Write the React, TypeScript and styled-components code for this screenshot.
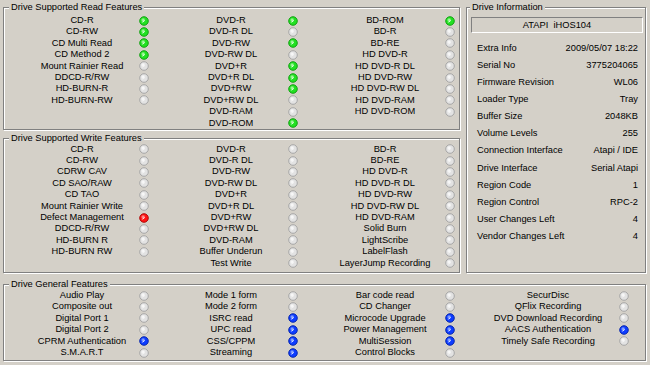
import React from "react";
import styled, { createGlobalStyle } from "styled-components";

type Kind = "g" | "o" | "b" | "r";
type Feature = [string, Kind];

const Global = createGlobalStyle`
  html, body { margin: 0; padding: 0; background: #d4d0c8; }
  body {
    font-family: "Liberation Sans", Arial, sans-serif;
    font-size: 9.3px;
    color: #000;
  }
`;

const Window = styled.div`
  width: 650px;
  height: 365px;
  box-sizing: border-box;
  padding: 7px 4px 0 3px;
  display: flex;
  flex-direction: column;
  gap: 11px;
  overflow: hidden;
`;

const TopRow = styled.div`
  display: flex;
  gap: 6px;
`;

const LeftColumn = styled.div`
  width: 457px;
  display: flex;
  flex-direction: column;
  gap: 8px;
`;

const Group = styled.div<{ $h: number; $w?: number }>`
  box-sizing: border-box;
  height: ${(p) => p.$h}px;
  ${(p) => (p.$w ? `width: ${p.$w}px;` : "")}
  border: 1px solid #808080;
  box-shadow: 1px 1px 0 #fff, inset 1px 1px 0 #fff;
  display: flex;
  flex-direction: column;
`;

const Title = styled.div<{ $left?: number }>`
  align-self: flex-start;
  margin: -7px 0 0 ${(p) => p.$left ?? 5}px;
  padding: 0 2px;
  height: 13px;
  line-height: 13px;
  background: #d4d0c8;
  white-space: nowrap;
`;

const Features = styled.div<{ $top: number }>`
  display: grid;
  grid-template-columns: 149px 151px 152px auto;
  margin-top: ${(p) => p.$top}px;
  padding-left: 28px;
`;

const Column = styled.div`
  display: flex;
  flex-direction: column;
`;

const Row = styled.div`
  display: flex;
  align-items: center;
  height: 11.4px;
`;

const Label = styled.span<{ $w: number }>`
  width: ${(p) => p.$w}px;
  text-align: center;
  white-space: nowrap;
  line-height: 11.4px;
`;

const LedSvg = styled.svg`
  display: block;
  flex: none;
  margin-left: 7px;
`;

const Field = styled.div`
  box-sizing: border-box;
  height: 16px;
  margin: 3px 2px 0 4px;
  border: 1px solid;
  border-color: #808080 #ffffff #ffffff #808080;
  text-align: center;
  line-height: 14px;
  white-space: pre;
`;

const InfoList = styled.div`
  margin-top: 6px;
  padding: 0 7px 0 10px;
  display: flex;
  flex-direction: column;
`;

const InfoRow = styled.div`
  display: flex;
  justify-content: space-between;
  align-items: center;
  height: 17.15px;
  white-space: nowrap;
`;

const LED_COLORS: Record<Kind, [string, string, string]> = {
  g: ["#c8ffc0", "#22e022", "#0c9c0c"],
  b: ["#b0c4ff", "#0d3cff", "#0020a8"],
  r: ["#ffb8b8", "#ff1414", "#a80000"],
  o: ["#ffffff", "#e2e2e2", "#a2a2a2"],
};

function Led({ k }: { k: Kind }) {
  const [hi, mid, edge] = LED_COLORS[k];
  const id = `led-grad-${k}`;
  return (
    <LedSvg width={10} height={10} viewBox="0 0 10 10">
      <defs>
        <radialGradient id={id} cx="40%" cy="38%" r="62%">
          <stop offset="0" stopColor={hi} />
          <stop offset="0.45" stopColor={mid} />
          <stop offset="1" stopColor={mid} />
        </radialGradient>
      </defs>
      <circle cx={5} cy={5} r={4.3} fill={`url(#${id})`} stroke={edge} strokeWidth={0.9} />
      <path
        d="M3.6 6.2 L5.2 4.6"
        stroke={k === "o" ? "#f6f6f6" : "#ffffff"}
        strokeWidth={1}
        strokeLinecap="round"
      />
    </LedSvg>
  );
}

const WIDTHS = [100, 100, 106, 128];

function FeatureGrid({ cols, top }: { cols: Feature[][]; top: number }) {
  return (
    <Features $top={top}>
      {cols.map((col, ci) => (
        <Column key={ci}>
          {col.map(([name, k]) => (
            <Row key={name}>
              <Label $w={WIDTHS[ci]}>{name}</Label>
              <Led k={k} />
            </Row>
          ))}
        </Column>
      ))}
    </Features>
  );
}

const readCols: Feature[][] = [
  [
    ["CD-R", "g"],
    ["CD-RW", "g"],
    ["CD Multi Read", "g"],
    ["CD Method 2", "g"],
    ["Mount Rainier Read", "o"],
    ["DDCD-R/RW", "o"],
    ["HD-BURN-R", "o"],
    ["HD-BURN-RW", "o"],
  ],
  [
    ["DVD-R", "g"],
    ["DVD-R DL", "o"],
    ["DVD-RW", "g"],
    ["DVD-RW DL", "o"],
    ["DVD+R", "g"],
    ["DVD+R DL", "g"],
    ["DVD+RW", "g"],
    ["DVD+RW DL", "o"],
    ["DVD-RAM", "o"],
    ["DVD-ROM", "g"],
  ],
  [
    ["BD-ROM", "g"],
    ["BD-R", "o"],
    ["BD-RE", "o"],
    ["HD DVD-R", "o"],
    ["HD DVD-R DL", "o"],
    ["HD DVD-RW", "o"],
    ["HD DVD-RW DL", "o"],
    ["HD DVD-RAM", "o"],
    ["HD DVD-ROM", "o"],
  ],
];

const writeCols: Feature[][] = [
  [
    ["CD-R", "o"],
    ["CD-RW", "o"],
    ["CDRW CAV", "o"],
    ["CD SAO/RAW", "o"],
    ["CD TAO", "o"],
    ["Mount Rainier Write", "o"],
    ["Defect Management", "r"],
    ["DDCD-R/RW", "o"],
    ["HD-BURN R", "o"],
    ["HD-BURN RW", "o"],
  ],
  [
    ["DVD-R", "o"],
    ["DVD-R DL", "o"],
    ["DVD-RW", "o"],
    ["DVD-RW DL", "o"],
    ["DVD+R", "o"],
    ["DVD+R DL", "o"],
    ["DVD+RW", "o"],
    ["DVD+RW DL", "o"],
    ["DVD-RAM", "o"],
    ["Buffer Underun", "o"],
    ["Test Write", "o"],
  ],
  [
    ["BD-R", "o"],
    ["BD-RE", "o"],
    ["HD DVD-R", "o"],
    ["HD DVD-R DL", "o"],
    ["HD DVD-RW", "o"],
    ["HD DVD-RW DL", "o"],
    ["HD DVD-RAM", "o"],
    ["Solid Burn", "o"],
    ["LightScribe", "o"],
    ["LabelFlash", "o"],
    ["LayerJump Recording", "o"],
  ],
];

const generalCols: Feature[][] = [
  [
    ["Audio Play", "o"],
    ["Composite out", "o"],
    ["Digital Port 1", "o"],
    ["Digital Port 2", "o"],
    ["CPRM Authentication", "b"],
    ["S.M.A.R.T", "o"],
  ],
  [
    ["Mode 1 form", "o"],
    ["Mode 2 form", "o"],
    ["ISRC read", "b"],
    ["UPC read", "b"],
    ["CSS/CPPM", "b"],
    ["Streaming", "b"],
  ],
  [
    ["Bar code read", "o"],
    ["CD Changer", "o"],
    ["Microcode Upgrade", "b"],
    ["Power Management", "b"],
    ["MultiSession", "b"],
    ["Control Blocks", "o"],
  ],
  [
    ["SecurDisc", "o"],
    ["QFlix Recording", "o"],
    ["DVD Download Recording", "o"],
    ["AACS Authentication", "b"],
    ["Timely Safe Recording", "o"],
  ],
];

const info: [string, string][] = [
  ["Extra Info", "2009/05/07 18:22"],
  ["Serial No", "3775204065"],
  ["Firmware Revision", "WL06"],
  ["Loader Type", "Tray"],
  ["Buffer Size", "2048KB"],
  ["Volume Levels", "255"],
  ["Connection Interface", "Atapi / IDE"],
  ["Drive Interface", "Serial Atapi"],
  ["Region Code", "1"],
  ["Region Control", "RPC-2"],
  ["User Changes Left", "4"],
  ["Vendor Changes Left", "4"],
];

export default function App() {
  return (
    <>
      <Global />
      <Window>
        <TopRow>
          <LeftColumn>
            <Group $h={123}>
              <Title>Drive Supported Read Features</Title>
              <FeatureGrid cols={readCols} top={1} />
            </Group>
            <Group $h={135}>
              <Title>Drive Supported Write Features</Title>
              <FeatureGrid cols={writeCols} top={-1.4} />
            </Group>
          </LeftColumn>
          <Group $h={266} $w={180}>
            <Title $left={3}>Drive Information</Title>
            <Field>{"ATAPI  iHOS104"}</Field>
            <InfoList>
              {info.map(([k, v]) => (
                <InfoRow key={k}>
                  <span>{k}</span>
                  <span>{v}</span>
                </InfoRow>
              ))}
            </InfoList>
          </Group>
        </TopRow>
        <Group $h={77}>
          <Title>Drive General Features</Title>
          <FeatureGrid cols={generalCols} top={-1} />
        </Group>
      </Window>
    </>
  );
}
